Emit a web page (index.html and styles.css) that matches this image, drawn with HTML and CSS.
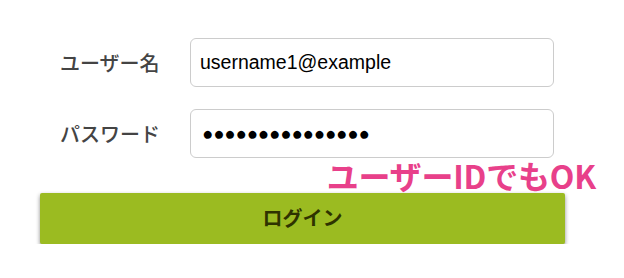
FILE: index.html
```html
<!DOCTYPE html>
<html lang="ja">
<head>
  <meta charset="UTF-8" />
  <meta name="viewport" content="width=device-width, initial-scale=1" />
  <title>ログイン</title>
  <link rel="stylesheet" href="styles.css">
</head>
<body>
  <form class="login-form" onsubmit="return false;">
    <div class="form-row">
      <label class="form-label" for="userName">ユーザー名</label>
      <input class="form-input" type="text" id="userName" value="username1@example" />
    </div>
    <div class="form-row">
      <label class="form-label" for="password">パスワード</label>
      <input class="form-input masked" type="text" id="password" value="●●●●●●●●●●●●●●●" />
    </div>
    <div class="note-row">
      <span class="note">ユーザーIDでもOK</span>
    </div>
    <button class="login-button" type="submit">ログイン</button>
  </form>
</body>
</html>
```

FILE: styles.css
```css
body {
  font-family: "Noto Sans CJK JP", sans-serif;
  background: #fff;
  margin: 0;
  padding: 0;
}
.login-form {
  width: 525px;
  padding: 38px 0 0 40px;
}
.form-row {
  display: flex;
  align-items: center;
  padding-left: 20px;
  margin-bottom: 22px;
}
.form-label {
  width: 130px;
  font-size: 20px;
  font-weight: 500;
  color: #444;
}
.form-input {
  width: 364px;
  height: 49px;
  box-sizing: border-box;
  border: 1px solid #ccc;
  border-radius: 6px;
  padding: 0 9px;
  font-family: "Liberation Sans", sans-serif;
  font-size: 19.5px;
  color: #000;
}
.masked {
  font-size: 18.5px;
  padding-left: 11px;
}
.form-row:nth-child(2) {
  margin-bottom: 0;
}
.note-row {
  display: flex;
  justify-content: flex-end;
  margin-right: -31px;
  height: 36px;
}
.note {
  font-size: 32px;
  font-weight: 700;
  color: #e8408a;
  line-height: 34px;
  letter-spacing: -0.2px;
}
.login-button {
  display: block;
  width: 525px;
  height: 51px;
  margin-top: -1px;
  background: #9bbb21;
  border: none;
  border-radius: 2px;
  box-shadow: 0 2px 4px rgba(0,0,0,0.45);
  font-family: "Noto Sans CJK JP", sans-serif;
  font-size: 20px;
  font-weight: 700;
  color: #2e3300;
  padding-bottom: 4px;
  cursor: pointer;
}
```
